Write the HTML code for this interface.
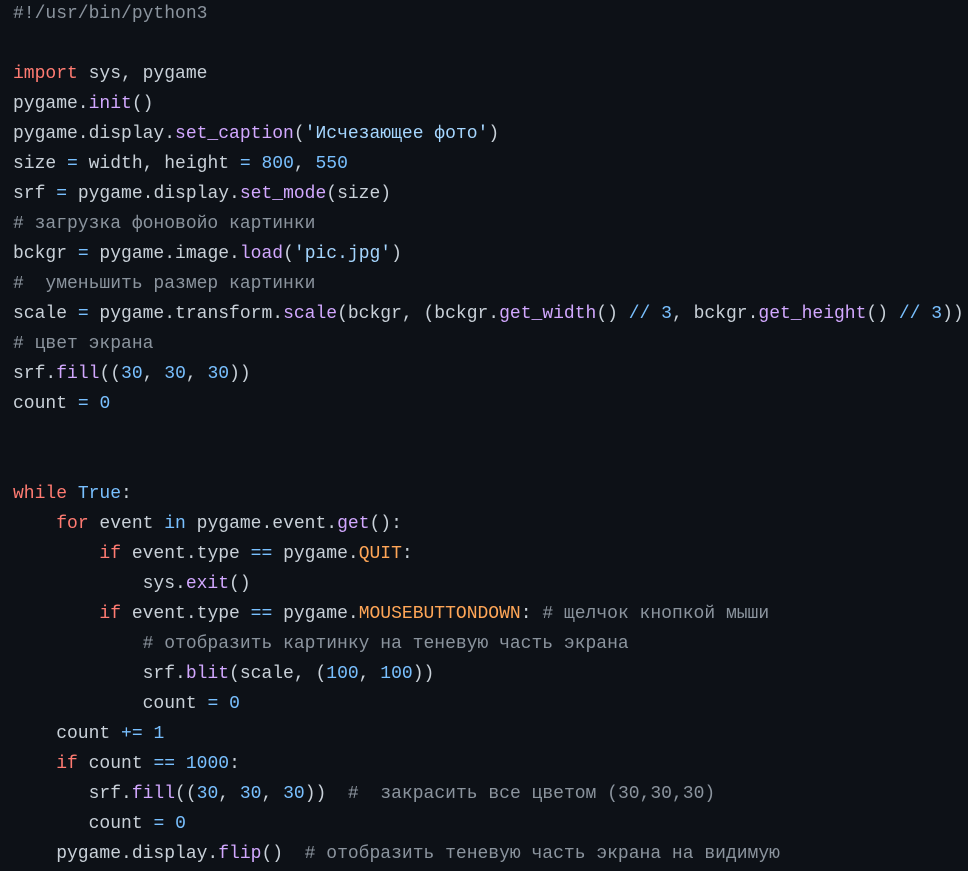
<!DOCTYPE html>
<html><head><meta charset="utf-8">
<style>
html,body{margin:0;padding:0;background:#0d1117;width:968px;height:871px;overflow:hidden}
pre{margin:0;padding:0 0 0 13px;font-family:"Liberation Mono","DejaVu Sans Mono",monospace;font-size:18px;line-height:30px;color:#c9d1d9;position:relative;top:-1px;white-space:pre}
.k{color:#ff7b72}.f{color:#d2a8ff}.n{color:#79c0ff}.s{color:#a5d6ff}.c{color:#8b949e}.o{color:#79c0ff}.x{color:#ffa657}
</style></head><body>
<pre><span class="c">#!/usr/bin/python3</span>

<span class="k">import</span> sys, pygame
pygame.<span class="f">init</span>()
pygame.display.<span class="f">set_caption</span>(<span class="s">'Исчезающее фото'</span>)
size <span class="o">=</span> width, height <span class="o">=</span> <span class="n">800</span>, <span class="n">550</span>
srf <span class="o">=</span> pygame.display.<span class="f">set_mode</span>(size)
<span class="c"># загрузка фоновойо картинки</span>
bckgr <span class="o">=</span> pygame.image.<span class="f">load</span>(<span class="s">'pic.jpg'</span>)
<span class="c">#  уменьшить размер картинки</span>
scale <span class="o">=</span> pygame.transform.<span class="f">scale</span>(bckgr, (bckgr.<span class="f">get_width</span>() <span class="o">//</span> <span class="n">3</span>, bckgr.<span class="f">get_height</span>() <span class="o">//</span> <span class="n">3</span>))
<span class="c"># цвет экрана</span>
srf.<span class="f">fill</span>((<span class="n">30</span>, <span class="n">30</span>, <span class="n">30</span>))
count <span class="o">=</span> <span class="n">0</span>


<span class="k">while</span> <span class="n">True</span>:
    <span class="k">for</span> event <span class="o">in</span> pygame.event.<span class="f">get</span>():
        <span class="k">if</span> event.type <span class="o">==</span> pygame.<span class="x">QUIT</span>:
            sys.<span class="f">exit</span>()
        <span class="k">if</span> event.type <span class="o">==</span> pygame.<span class="x">MOUSEBUTTONDOWN</span>: <span class="c"># щелчок кнопкой мыши</span>
            <span class="c"># отобразить картинку на теневую часть экрана</span>
            srf.<span class="f">blit</span>(scale, (<span class="n">100</span>, <span class="n">100</span>))
            count <span class="o">=</span> <span class="n">0</span>
    count <span class="o">+=</span> <span class="n">1</span>
    <span class="k">if</span> count <span class="o">==</span> <span class="n">1000</span>:
       srf.<span class="f">fill</span>((<span class="n">30</span>, <span class="n">30</span>, <span class="n">30</span>))  <span class="c">#  закрасить все цветом (30,30,30)</span>
       count <span class="o">=</span> <span class="n">0</span>
    pygame.display.<span class="f">flip</span>()  <span class="c"># отобразить теневую часть экрана на видимую</span>
</pre>
</body></html>
